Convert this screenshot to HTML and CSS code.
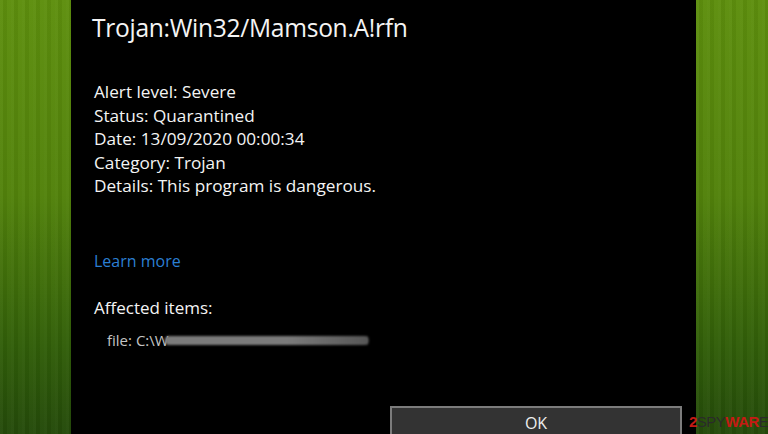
FILE: index.html
```html
<!DOCTYPE html>
<html lang="en">
<head>
<meta charset="utf-8">
<title>Trojan:Win32/Mamson.A!rfn</title>
<link rel="stylesheet" href="styles.css">
</head>
<body>
<div class="screen">
  <div class="side side-left"></div>
  <main class="dialog">
    <h1 class="title">Trojan:Win32/Mamson.A!rfn</h1>
    <ul class="facts">
      <li>Alert level: Severe</li>
      <li>Status: Quarantined</li>
      <li>Date: 13/09/2020 00:00:34</li>
      <li>Category: Trojan</li>
      <li>Details: This program is dangerous.</li>
    </ul>
    <a class="learn" href="#">Learn more</a>
    <div class="affected">Affected items:</div>
    <div class="file">file: C:\W<span class="smear"></span></div>
    <div class="actions">
      <button class="ok">OK</button>
    </div>
  </main>
  <div class="side side-right"></div>
  <div class="watermark"><span class="red">2</span><span class="dark">SPY</span><span class="red">WAR</span><span class="dark">E</span></div>
</div>
</body>
</html>
```
FILE: styles.css
```css
html, body {
  margin: 0;
  padding: 0;
  background: #000;
}
.screen {
  position: relative;
  display: flex;
  width: 768px;
  height: 434px;
  overflow: hidden;
  font-family: "Open Sans", "Noto Sans", sans-serif;
}
.side {
  flex: none;
  background:
    repeating-linear-gradient(90deg, rgba(255,255,255,0.03) 0 3px, rgba(0,0,0,0.04) 3px 7px, rgba(255,255,255,0.02) 7px 11px),
    linear-gradient(180deg, #5e8f0e 0%, #52820b 45%, #315e09 80%, #244a0a 100%);
}
.side-left { width: 71px; }
.side-right { width: 72px; }
.dialog {
  flex: 1;
  background: #000;
  display: flex;
  flex-direction: column;
  padding: 0 0 0 21px;
  color: #f4f4f4;
}
.title {
  margin: 13px 0 0;
  font-size: 24.6px;
  font-weight: 400;
  letter-spacing: -0.3px;
  line-height: 30px;
}
.facts {
  list-style: none;
  margin: 37px 0 0 2px;
  padding: 0;
  font-size: 17.2px;
  line-height: 23.5px;
}
.learn {
  margin: 52px 0 0 2px;
  color: #2b7fd3;
  text-decoration: none;
  font-size: 16px;
  line-height: 22px;
}
.affected {
  margin: 24px 0 0 2px;
  font-size: 17px;
  line-height: 24px;
}
.file {
  margin: 10px 0 0 15px;
  font-size: 15px;
  color: #c4c4c4;
  line-height: 20px;
  display: flex;
  align-items: center;
}
.smear {
  display: inline-block;
  width: 204px;
  height: 9px;
  margin-left: -4px;
  margin-top: 2px;
  background:
    linear-gradient(90deg, rgba(0,0,0,0) 0%, rgba(0,0,0,0) 60%, rgba(0,0,0,0.3) 100%),
    repeating-linear-gradient(90deg, #bdbdbd 0 1px, #5a5a5a 1px 3px);
  filter: blur(1.1px);
  border-radius: 4px;
}
.actions {
  margin-top: auto;
  display: flex;
  justify-content: flex-end;
  padding-right: 14px;
}
.ok {
  width: 292px;
  height: 28px;
  background: #333;
  border: 2px solid #7c7c7c;
  border-bottom: none;
  color: #eee;
  font-family: inherit;
  font-size: 16px;
  padding: 4px 0 0;
  line-height: 20px;
}
.watermark {
  position: absolute;
  left: 689px;
  top: 414px;
  font-family: "Liberation Sans", sans-serif;
  font-size: 15px;
  line-height: 16px;
  letter-spacing: -0.5px;
}
.watermark .red { color: #c41a14; font-weight: 700; }
.watermark .dark { color: #2a2a2a; }
```
